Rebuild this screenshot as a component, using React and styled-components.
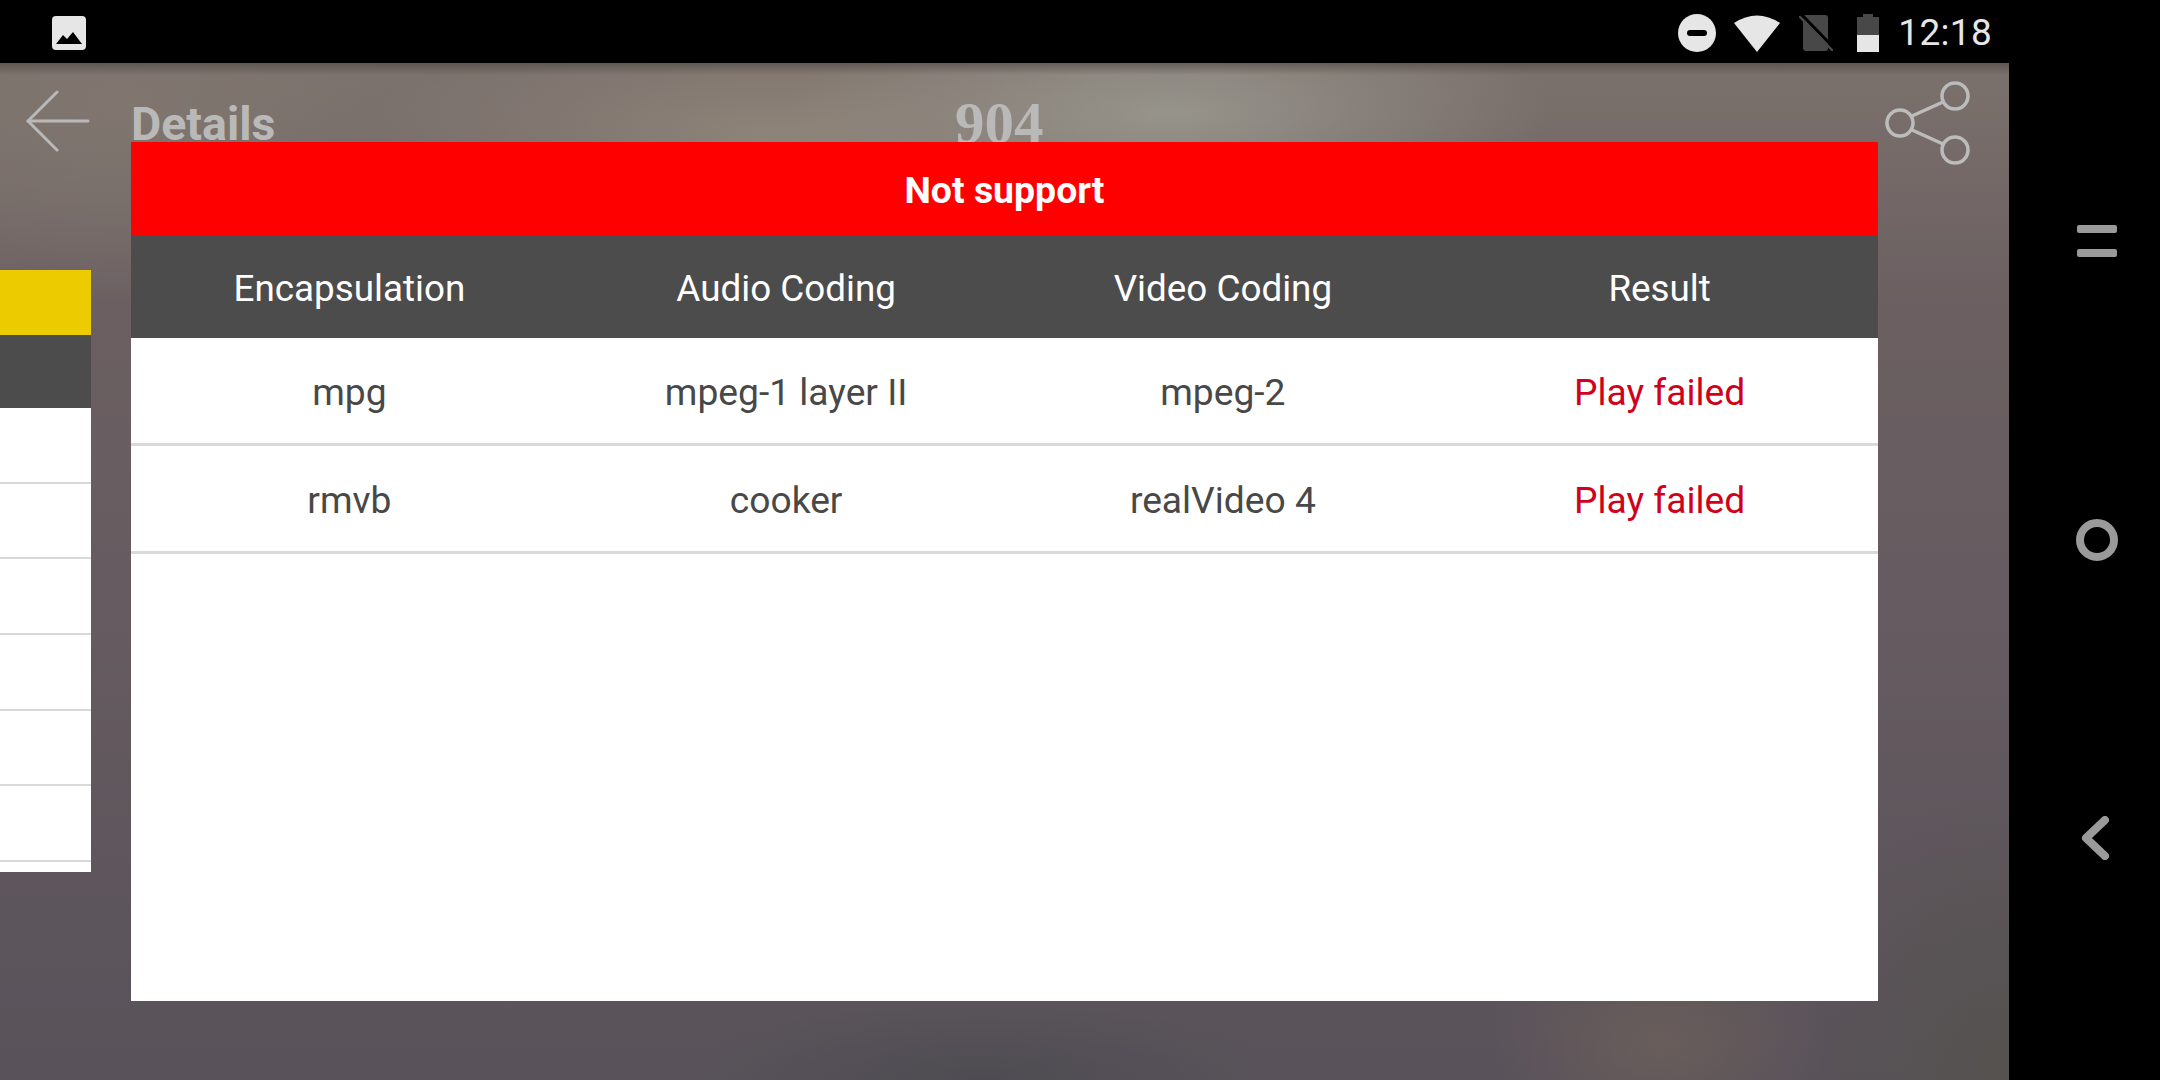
import React from "react";
import styled, { createGlobalStyle } from "styled-components";

const GlobalStyle = createGlobalStyle`
  html, body {
    margin: 0;
    padding: 0;
    background: #000;
    font-family: Roboto, "Liberation Sans", sans-serif;
  }
`;

const Device = styled.div`
  width: 2160px;
  height: 1080px;
  display: flex;
  background: #000;
  overflow: hidden;
`;

const Screen = styled.div`
  width: 2009px;
  display: flex;
  flex-direction: column;
`;

const StatusBar = styled.div`
  height: 63px;
  box-sizing: border-box;
  flex: none;
  display: flex;
  align-items: center;
  padding: 2px 17px 0 51px;
  color: #e6e6e6;
`;

const StatusRight = styled.div`
  margin-left: auto;
  display: flex;
  align-items: center;
  gap: 19px;
`;

const DndIcon = styled.svg`
  margin-right: -1px;
`;

const BatteryIcon = styled.svg`
  margin-left: 5px;
`;

const Clock = styled.span`
  font-size: 37px;
  letter-spacing: 0.3px;
`;

const Page = styled.div`
  position: relative;
  flex: 1;
  display: flex;
  flex-direction: column;
  background:
    linear-gradient(180deg, rgba(70, 62, 58, 0.55) 0, rgba(70, 62, 58, 0) 12px),
    radial-gradient(ellipse 380px 130px at 1170px 50px, #97948b 0%, rgba(151, 148, 139, 0) 100%),
    radial-gradient(ellipse 420px 110px at 780px 70px, #8f8479 0%, rgba(143, 132, 121, 0) 100%),
    radial-gradient(ellipse 420px 200px at 120px 40px, #80766f 0%, rgba(128, 118, 111, 0) 100%),
    radial-gradient(ellipse 170px 110px at 1660px 980px, rgba(108, 96, 90, 0.8) 0%, rgba(108, 96, 90, 0) 100%),
    radial-gradient(ellipse 300px 80px at 980px 1017px, #4e4c52 0%, rgba(78, 76, 82, 0) 100%),
    radial-gradient(ellipse 220px 300px at 2009px 1017px, #55524f 0%, rgba(85, 82, 79, 0) 100%),
    linear-gradient(180deg, #7b716c 0%, #6b5f61 24%, #655b60 55%, #59525a 100%);
`;

const TopBar = styled.div`
  height: 79px;
  flex: none;
  display: flex;
  align-items: flex-start;
  padding: 27px 38px 0 26px;
  color: #b9b9b9;
`;

const BackIcon = styled.svg`
  width: 64px;
  height: 62px;
  flex: none;
`;

const PageTitle = styled.div`
  margin-left: 41px;
  width: 540px;
  font-size: 46.5px;
  font-weight: 700;
  line-height: 52px;
  margin-top: 8px;
`;

const PageCode = styled.div`
  font-family: "Liberation Serif", serif;
  font-size: 59px;
  font-weight: 700;
  line-height: 62px;
  margin-left: 284px;
  margin-top: 2px;
`;

const ShareIcon = styled.svg`
  width: 86px;
  height: 84px;
  margin-left: auto;
  margin-top: -9px;
`;

const BackTable = styled.div`
  width: 91px;
  margin-top: 101px;
  display: flex;
  flex-direction: column;
`;

const BackBand = styled.div`
  height: ${(props) => props.$h}px;
  background: ${(props) => props.$bg};
`;

const BackRow = styled.div`
  height: 75.7px;
  box-sizing: border-box;
  background: #fff;
  border-bottom: 2px solid #d9d9d9;
`;

const BackTail = styled.div`
  height: 10px;
  background: #fff;
`;

const Modal = styled.div`
  position: absolute;
  left: 131px;
  top: 79px;
  width: 1747px;
  height: 859px;
  background: #fff;
  display: flex;
  flex-direction: column;
`;

const ModalTitle = styled.div`
  height: 93px;
  box-sizing: border-box;
  flex: none;
  background: #ff0000;
  color: #fff;
  font-size: 37.4px;
  font-weight: 700;
  display: flex;
  align-items: center;
  justify-content: center;
  padding-top: 2px;
`;

const Row = styled.div`
  display: grid;
  grid-template-columns: repeat(4, 1fr);
  align-items: center;
  text-align: center;
  flex: none;
  font-size: 36.8px;
  box-sizing: border-box;
  padding-top: 3px;
`;

const HeadRow = styled(Row)`
  height: 103px;
  background: #4c4c4c;
  color: #fff;
`;

const BodyRow = styled(Row)`
  height: 108px;
  border-bottom: 3px solid #d9d9d9;
  color: #484848;
  font-size: 37.2px;
`;

const Failed = styled.span`
  color: #d0021b;
`;

const NavBar = styled.div`
  flex: 1;
  display: flex;
  flex-direction: column;
  align-items: center;
  padding: 225px 0 0 25px;
`;

const MenuBar = styled.div`
  width: 40px;
  height: 8px;
  border-radius: 2px;
  background: #9a9a9a;
  margin-bottom: 16px;
`;

const HomeButton = styled.div`
  width: 42px;
  height: 42px;
  box-sizing: border-box;
  border: 8px solid #9a9a9a;
  border-radius: 50%;
  margin-top: 246px;
`;

const BackButton = styled.svg`
  width: 30px;
  height: 44px;
  margin-top: 255px;
  margin-right: 5px;
`;

const rows = [
  ["mpg", "mpeg-1 layer II", "mpeg-2"],
  ["rmvb", "cooker", "realVideo 4"],
];

export default function App() {
  return (
    <Device>
      <GlobalStyle />
      <Screen>
        <StatusBar>
          <svg width="36" height="36" viewBox="0 0 36 36">
            <rect x="1" y="1" width="34" height="34" rx="4" fill="#e6e6e6" />
            <path d="M5 29 L12 20 L16 24 L22 17 L31 29 Z" fill="#000" />
          </svg>
          <StatusRight>
            <DndIcon width="38" height="38" viewBox="0 0 38 38">
              <circle cx="19" cy="19" r="19" fill="#e6e6e6" />
              <rect x="9" y="16" width="20" height="6" rx="3" fill="#000" />
            </DndIcon>
            <svg width="46" height="38" viewBox="0 0 46 38">
              <path d="M0 9 Q23 -6 46 9 L23 38 Z" fill="#e6e6e6" />
            </svg>
            <svg width="34" height="38" viewBox="0 0 34 38">
              <path d="M7 1 H26 a3 3 0 0 1 3 3 V34 a3 3 0 0 1 -3 3 H7 a3 3 0 0 1 -3 -3 V4 a3 3 0 0 1 3 -3 Z" fill="#484848" />
              <path d="M3 1 L35 34" stroke="#000" strokeWidth="3" />
              <path d="M1 3 L33 36" stroke="#484848" strokeWidth="2.5" strokeLinecap="round" />
            </svg>
            <BatteryIcon width="22" height="38" viewBox="0 0 22 38">
              <path d="M6 3 V0 H16 V3 H22 V38 H0 V3 Z" fill="#484848" />
              <rect y="21" width="22" height="17" fill="#e6e6e6" />
            </BatteryIcon>
            <Clock>12:18</Clock>
          </StatusRight>
        </StatusBar>
        <Page>
          <TopBar>
            <BackIcon viewBox="0 0 64 62" fill="none" stroke="#b9b9b9" strokeWidth="3" strokeLinecap="round" strokeLinejoin="round">
              <path d="M31 2 L2 31 L31 60" />
              <path d="M2 31 H62" />
            </BackIcon>
            <PageTitle>Details</PageTitle>
            <PageCode>904</PageCode>
            <ShareIcon viewBox="0 0 86 84" fill="none" stroke="#bcbcbc" strokeWidth="3.5">
              <circle cx="15" cy="42" r="13" />
              <circle cx="70" cy="15" r="13" />
              <circle cx="70" cy="69" r="13" />
              <path d="M27 35 L58 21" />
              <path d="M27 49 L58 63" />
            </ShareIcon>
          </TopBar>
          <BackTable>
            <BackBand $h={65} $bg="#eccc00" />
            <BackBand $h={73} $bg="#4c4c4c" />
            {[0, 1, 2, 3, 4, 5].map((i) => (
              <BackRow key={i} />
            ))}
            <BackTail />
          </BackTable>
          <Modal>
            <ModalTitle>Not support</ModalTitle>
            <HeadRow>
              <span>Encapsulation</span>
              <span>Audio Coding</span>
              <span>Video Coding</span>
              <span>Result</span>
            </HeadRow>
            {rows.map((r) => (
              <BodyRow key={r[0]}>
                <span>{r[0]}</span>
                <span>{r[1]}</span>
                <span>{r[2]}</span>
                <Failed>Play failed</Failed>
              </BodyRow>
            ))}
          </Modal>
        </Page>
      </Screen>
      <NavBar>
        <MenuBar />
        <MenuBar />
        <HomeButton />
        <BackButton viewBox="0 0 30 44" fill="none" stroke="#9a9a9a" strokeWidth="8" strokeLinecap="round" strokeLinejoin="round">
          <path d="M25 4 L6 22 L25 40" />
        </BackButton>
      </NavBar>
    </Device>
  );
}
